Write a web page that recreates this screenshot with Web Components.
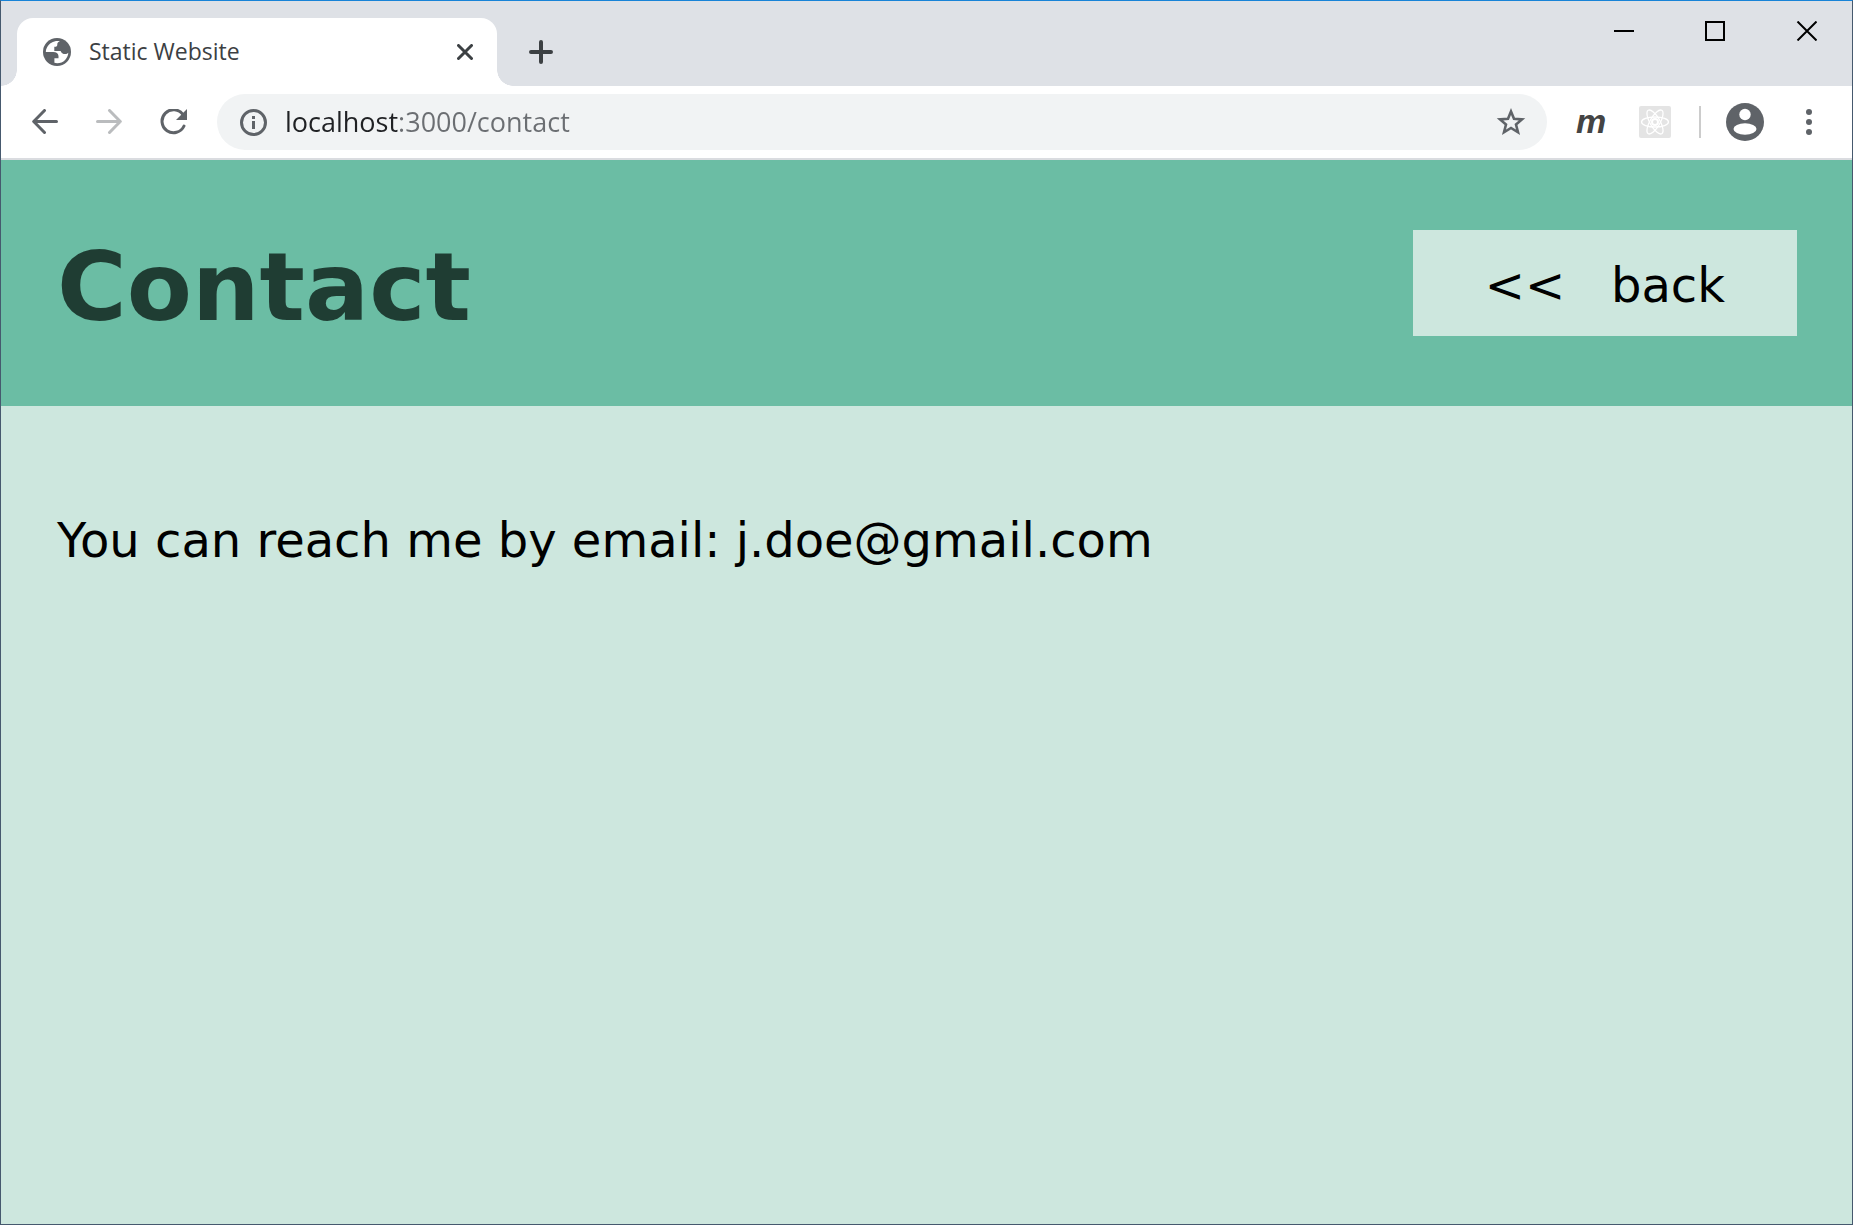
<!DOCTYPE html>
<html lang="en">
<head>
<meta charset="utf-8">
<title>Static Website</title>
<style>
  html, body { height: 100%; margin: 0; }
</style>
</head>
<body>
<browser-window>
  <tab-strip slot="tabs">
    <browser-tab>Static Website</browser-tab>
  </tab-strip>
  <tool-bar slot="toolbar" url="localhost:3000/contact"></tool-bar>
  <contact-page>
    <page-header>Contact<back-link slot="action"></back-link></page-header>
    <page-text>You can reach me by email: j.doe@gmail.com</page-text>
  </contact-page>
</browser-window>

<script>
const define = (name, html) => {
  const template = document.createElement('template');
  template.innerHTML = html;
  customElements.define(name, class extends HTMLElement {
    constructor() {
      super();
      this.attachShadow({ mode: 'open' }).append(template.content.cloneNode(true));
    }
    connectedCallback() {
      const field = this.shadowRoot.querySelector('input');
      if (field && this.hasAttribute('url')) field.value = this.getAttribute('url');
    }
  });
};

const controls = `
  button {
    display: flex; align-items: center; justify-content: center; flex: none;
    margin: 0; padding: 0; border: 0; background: none; color: inherit; font: inherit;
  }
  svg { display: block; flex: none; }
`;

define('browser-window', `
  <style>
    :host {
      display: flex; flex-direction: column; box-sizing: border-box; min-height: 100%;
      border: 1px solid #46596e; border-top-color: #1883d7; background: #fff;
      font-family: "Open Sans", "Noto Sans", sans-serif;
    }
    main { display: flex; flex: 1; }
    ::slotted(contact-page) { flex: 1; }
  </style>
  <slot name="tabs"></slot>
  <slot name="toolbar"></slot>
  <main><slot></slot></main>
`);

define('tab-strip', `
  <style>
    ${controls}
    :host { display: flex; align-items: flex-end; background: #dee1e6; padding: 0 0 0 16px; color: #3c4043; }
    .new { width: 56px; height: 68px; margin-left: 16px; }
    .window { display: flex; align-self: flex-start; margin-left: auto; color: #000; }
    .window button { width: 91px; height: 60px; }
  </style>
  <slot></slot>
  <button class="new" aria-label="New tab">
    <svg width="24" height="24" viewBox="0 0 24 24" fill="none" stroke="currentColor" stroke-width="4" stroke-linecap="round"><path d="M12 2v20M2 12h20"/></svg>
  </button>
  <div class="window">
    <button aria-label="Minimize"><svg width="21" height="20" viewBox="0 0 21 20"><path d="M0 9h20v2H0z"/></svg></button>
    <button aria-label="Maximize"><svg width="21" height="20" viewBox="0 0 21 20" fill="none" stroke="#000" stroke-width="2"><path d="M1 1h18v18H1z"/></svg></button>
    <button aria-label="Close window"><svg width="21" height="20" viewBox="0 0 21 20" fill="none" stroke="#000" stroke-width="2"><path d="M1.500.5l19 19M20.500.5l-19 19"/></svg></button>
  </div>
`);

define('browser-tab', `
  <style>
    ${controls}
    :host {
      position: relative; display: flex; align-items: center; box-sizing: border-box;
      width: 480px; height: 68px; margin-top: 17px; padding: 0 16px 0 26px; gap: 18px;
      border-radius: 16px 16px 0 0; background: #fff; font-size: 23px; line-height: 32px;
    }
    :host::before, :host::after {
      content: ""; position: absolute; bottom: 0; width: 16px; height: 16px;
    }
    :host::before { right: 100%; background: radial-gradient(circle at 0 0, transparent 15.5px, #fff 16px); }
    :host::after { left: 100%; background: radial-gradient(circle at 100% 0, transparent 15.5px, #fff 16px); }
    span { flex: 1; padding-bottom: 2px; white-space: nowrap; }
    button { width: 32px; height: 32px; }
  </style>
  <svg width="28" height="28" viewBox="0 0 28 28">
    <circle cx="14" cy="14" r="14" fill="#5f6368"/>
    <path fill="#fff" d="M17 3.3C12 2.2 6.500 4.600 4 9.500c-.9 1.700-1.200 3-1.100 4.500h7.300c3.200.1 5.100 1.400 5.300 4v2.300h-4.100v4.500c3.800 1 8-.1 10.700-2.900 2-2.100 3-4.500 3.200-7.200-.8.9-1.800 1.300-3.100 1.300-2.300 0-4-1-4.600-3.100h-6.300V8.800c2.600 0 3-.7 3-2.400 0-1.600.8-2.500 2.700-3.100z"/>
  </svg>
  <span><slot></slot></span>
  <button aria-label="Close tab">
    <svg width="16" height="16" viewBox="0 0 16 16" fill="none" stroke="currentColor" stroke-width="3" stroke-linecap="round"><path d="M1.500 1.500l13 13M14.500 1.500l-13 13"/></svg>
  </button>
`);

define('tool-bar', `
  <style>
    ${controls}
    :host {
      display: flex; align-items: center; gap: 8px; padding: 8px 15px 8px 16px;
      border-bottom: 2px solid #dadce0; background: #fff; color: #5f6368;
    }
    button { width: 56px; height: 56px; }
    .address {
      display: flex; align-items: center; flex: 1; min-width: 0; height: 56px; margin: 0 8px;
      border-radius: 28px; background: #f1f3f4;
    }
    .info { width: 40px; margin-left: 16px; }
    .star { width: 72px; }
    input {
      flex: 1; min-width: 0; height: 40px; margin: 0; padding: 0 0 0 12px; border: 0; outline: 0;
      font: 27px/40px "Open Sans", "Noto Sans", sans-serif; color: transparent;
      background: linear-gradient(to right, #202124 125px, #6b6e72 125px);
      -webkit-background-clip: text; background-clip: text;
    }
    .m { font: italic bold 34px/40px "Liberation Sans", sans-serif; color: #444; padding-bottom: 2px; }
    hr { flex: none; width: 2px; height: 32px; margin: 0 8px; border: 0; background: #ccc; }
  </style>
  <button aria-label="Back"><svg width="26" height="26" viewBox="0 0 26 26" fill="none" stroke="currentColor" stroke-width="3" stroke-linecap="round" stroke-linejoin="round"><path d="M24.500 12.500H2M12.500 1.500L1.700 12.500l10.800 11"/></svg></button>
  <button aria-label="Forward" disabled><svg width="26" height="26" viewBox="0 0 26 26" fill="none" stroke="#babcbe" stroke-width="3" stroke-linecap="round" stroke-linejoin="round"><path d="M1.500 12.500H24M13.500 1.500l10.800 11-10.800 11"/></svg></button>
  <button aria-label="Reload"><svg width="27" height="26" viewBox="0 0 27 26"><path d="M23 5.700A11.500 11.500 0 1 0 24 17" fill="none" stroke="currentColor" stroke-width="3" stroke-linecap="round"/><path d="M27 0v11H16z" fill="currentColor"/></svg></button>
  <div class="address">
    <button class="info" aria-label="Site information"><svg width="28" height="28" viewBox="0 0 28 28"><circle cx="14.500" cy="14.500" r="12" fill="none" stroke="currentColor" stroke-width="3"/><path d="M13 8h3v3h-3zM13 13h3v8h-3z" fill="currentColor"/></svg></button>
    <input type="text" aria-label="Address" spellcheck="false">
    <button class="star" aria-label="Bookmark this page"><svg width="30" height="28" viewBox="0 0 30 28"><path d="M15 3.500l3 7.300 8 .6-6 5.100 2 7.800-7-4.300-7 4.300 2-7.800-6-5.100 8-.6z" fill="none" stroke="currentColor" stroke-width="2.600"/></svg></button>
  </div>
  <button class="m">m</button>
  <button aria-label="React Developer Tools"><svg width="32" height="32" viewBox="0 0 32 32" fill="none" stroke="#fff" stroke-width="1.300"><rect width="32" height="32" rx="2" fill="#e4e4e4" stroke="none"/><ellipse cx="16" cy="16" rx="13.500" ry="5"/><ellipse cx="16" cy="16" rx="13.500" ry="5" transform="rotate(60 16 16)"/><ellipse cx="16" cy="16" rx="13.500" ry="5" transform="rotate(120 16 16)"/><circle cx="16" cy="16" r="3" fill="#e4e4e4" stroke-width="2"/></svg></button>
  <hr>
  <button aria-label="Profile"><svg width="38" height="38" viewBox="0 0 38 38"><circle cx="19" cy="19" r="19" fill="currentColor"/><circle cx="19" cy="11.500" r="5.700" fill="#fff"/><ellipse cx="19" cy="26" rx="11.500" ry="5.800" fill="#fff"/></svg></button>
  <button aria-label="Menu"><svg width="6" height="26" viewBox="0 0 6 26" fill="currentColor"><circle cx="3" cy="3" r="3"/><circle cx="3" cy="13" r="3"/><circle cx="3" cy="23" r="3"/></svg></button>
`);

define('contact-page', `
  <style>
    :host { display: block; background: #cde7de; color: #000; font: 48px/58px Verdana, "DejaVu Sans", sans-serif; }
  </style>
  <slot></slot>
`);

define('page-header', `
  <style>
    :host { display: block; }
    header { display: flex; align-items: center; justify-content: space-between; padding: 64px 55px 64px 56px; background: #6bbda4; }
    h1 { margin: 0; padding-top: 8px; font-size: 95px; line-height: 110px; color: #1f3d33; }
  </style>
  <header><h1><slot></slot></h1><slot name="action"></slot></header>
`);

define('back-link', `
  <style>
    :host { display: block; }
    a { display: block; padding: 26px 72px 22px; background: #cde7de; color: inherit; text-decoration: none; white-space: nowrap; }
  </style>
  <a href="#">&lt;&lt;&nbsp;&nbsp;&nbsp;back</a>
`);

define('page-text', `
  <style>
    :host { display: block; }
    p { margin: 0; padding: 105px 56px; }
  </style>
  <p><slot></slot></p>
`);
</script>
</body>
</html>
